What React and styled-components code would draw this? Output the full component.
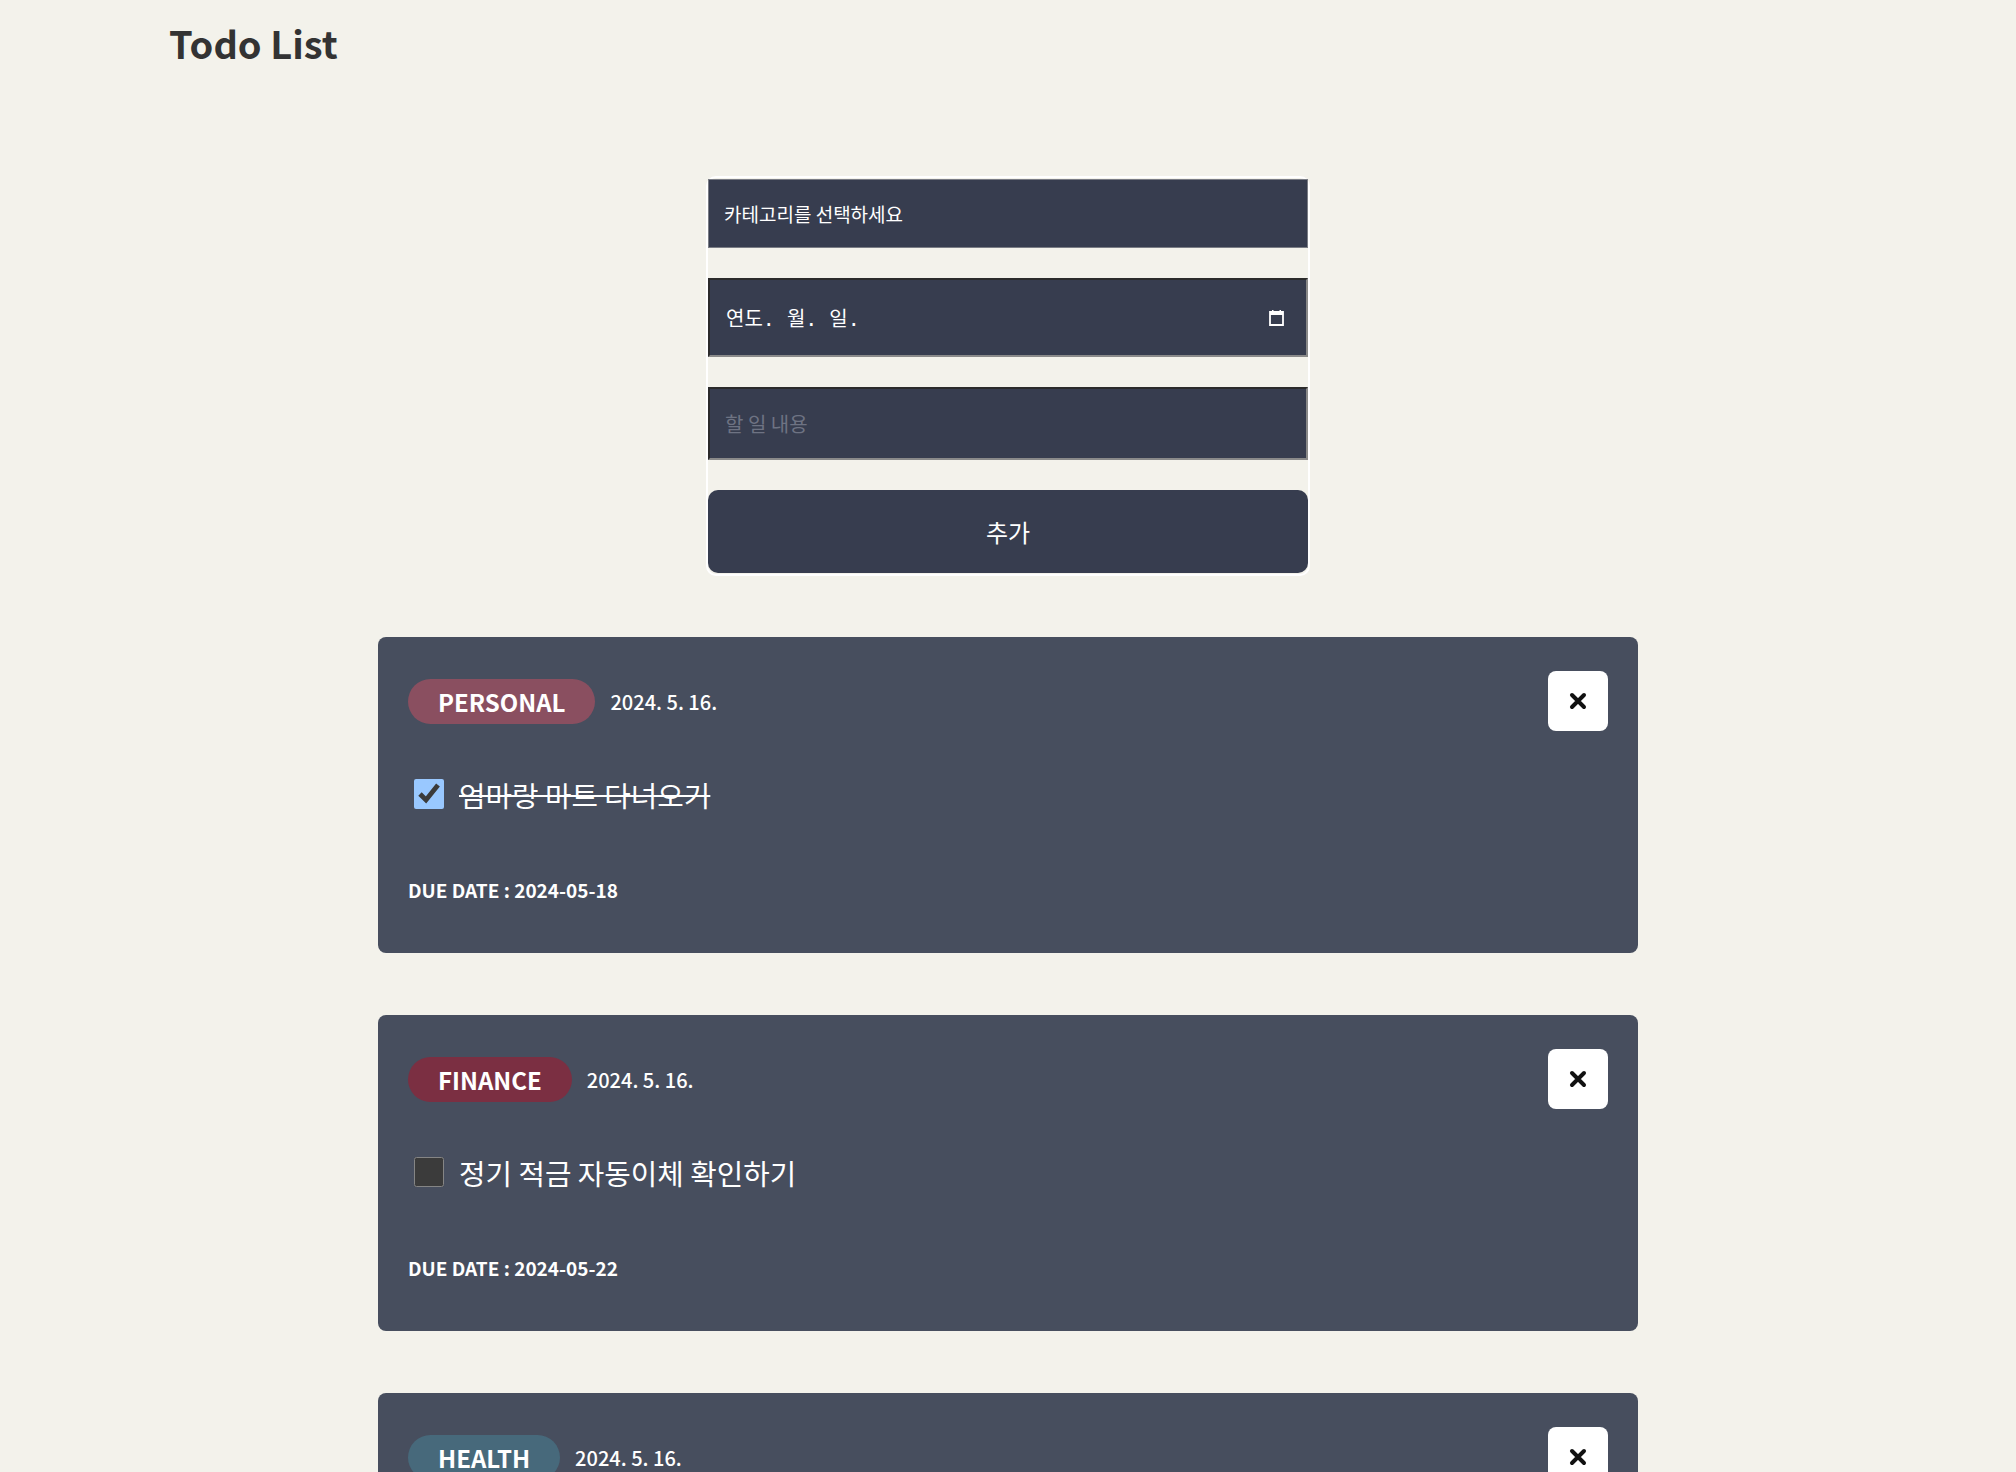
import React from "react";
import styled, { createGlobalStyle } from "styled-components";

const GlobalStyle = createGlobalStyle`
  body {
    margin: 0;
    background-color: #f3f2eb;
    font-family: "Noto Sans CJK KR", "Noto Sans", sans-serif;
  }
`;

const Page = styled.div`
  min-height: 1472px;
  padding-bottom: 80px;
`;

const Title = styled.h1`
  margin: 0;
  padding: 12px 0 0 169px;
  font-size: 38px;
  font-weight: 700;
  color: #333;
  line-height: 62px;
`;

const Form = styled.form`
  width: 600px;
  margin: 102px auto 0;
  border: 2px solid #fff;
  border-radius: 10px;
  padding: 1px 0;
  display: flex;
  flex-direction: column;
  gap: 30px;
`;

const Select = styled.select`
  appearance: none;
  height: 69px;
  background-color: #373d4f;
  border: 1px solid #7a7d85;
  color: #fff;
  padding: 0 15px;
  font-family: "Noto Sans CJK KR", sans-serif;
  font-size: 19px;
  outline: none;
`;

const DateField = styled.div`
  box-sizing: border-box;
  height: 79px;
  background-color: #373d4f;
  border-style: solid;
  border-width: 2px;
  border-color: #2b2b2b #8a8a8a #8a8a8a #2b2b2b;
  display: flex;
  align-items: center;
  justify-content: space-between;
  padding: 0 21px 0 16px;
  color: #fff;
  font-family: "DejaVu Sans Mono", "Noto Sans CJK KR", monospace;
  font-size: 20px;
`;

const TextInput = styled.input`
  box-sizing: border-box;
  height: 73px;
  background-color: #373d4f;
  border-style: solid;
  border-width: 2px;
  border-color: #2b2b2b #8a8a8a #8a8a8a #2b2b2b;
  padding: 0 15px;
  color: #fff;
  font-family: "Noto Sans CJK KR", sans-serif;
  font-size: 20px;
  outline: none;
  &::placeholder {
    color: #6e7383;
  }
`;

const AddButton = styled.button`
  height: 83px;
  border: none;
  border-radius: 10px;
  background-color: #373d4f;
  color: #fff;
  font-family: "Noto Sans CJK KR", sans-serif;
  font-size: 24px;
  cursor: pointer;
`;

const List = styled.ul`
  list-style: none;
  margin: 61px auto 0;
  padding: 0;
  width: 1260px;
  display: flex;
  flex-direction: column;
  gap: 62px;
`;

const Card = styled.li`
  background-color: #474e5e;
  border-radius: 8px;
  padding: 34px 30px 49px;
  color: #fff;
`;

const CardHeader = styled.div`
  display: flex;
  align-items: center;
  height: 60px;
`;

const Tag = styled.span`
  display: inline-flex;
  align-items: center;
  height: 45px;
  padding: 0 30px;
  border-radius: 23px;
  background-color: ${(p) => p.color};
  font-size: 24px;
  font-weight: 700;
`;

const CreatedAt = styled.span`
  margin-left: 15px;
  font-size: 20px;
  font-weight: 500;
`;

const CloseButton = styled.button`
  margin-left: auto;
  width: 60px;
  height: 60px;
  border: none;
  border-radius: 8px;
  background: #fff;
  display: flex;
  align-items: center;
  justify-content: center;
  cursor: pointer;
`;

const TodoRow = styled.label`
  display: flex;
  align-items: center;
  margin-top: 44px;
  height: 38px;
  padding-left: 6px;
`;

const Check = styled.input`
  color-scheme: dark;
  width: 30px;
  height: 30px;
  margin: 0 15px 0 0;
`;

const TodoText = styled.span`
  font-size: 28.8px;
  text-decoration: ${(p) => (p.done ? "line-through" : "none")};
`;

const DueDate = styled.p`
  margin: 63px 0 0;
  font-size: 19px;
  font-weight: 700;
  line-height: 28px;
`;

const CalendarIcon = () => (
  <svg width="17" height="18" viewBox="0 0 17 18">
    <path d="M2 3h13v13H2z" fill="none" stroke="#fff" strokeWidth="1.8" />
    <rect x="2" y="3" width="13" height="3" fill="#fff" />
    <rect x="4" y="1" width="1.5" height="3" fill="#fff" />
    <rect x="11.5" y="1" width="1.5" height="3" fill="#fff" />
  </svg>
);

const XIcon = () => (
  <svg width="18" height="18" viewBox="0 0 18 18">
    <path d="M3 3l12 12M15 3L3 15" stroke="#111" strokeWidth="4" strokeLinecap="round" />
  </svg>
);

const todos = [
  { id: 1, category: "PERSONAL", color: "#8a4f60", text: "엄마랑 마트 다녀오기", done: true, due: "2024-05-18" },
  { id: 2, category: "FINANCE", color: "#7b2f42", text: "정기 적금 자동이체 확인하기", done: false, due: "2024-05-22" },
  { id: 3, category: "HEALTH", color: "#47697b", text: "저녁 산책 30분 하기", done: false, due: "2024-05-20" },
];

export default function App() {
  return (
    <Page>
      <GlobalStyle />
      <Title>Todo List</Title>
      <Form onSubmit={(e) => e.preventDefault()}>
        <Select defaultValue="">
          <option value="">카테고리를 선택하세요</option>
          <option value="PERSONAL">PERSONAL</option>
          <option value="FINANCE">FINANCE</option>
          <option value="HEALTH">HEALTH</option>
        </Select>
        <DateField>
          <span>연도. 월. 일.</span>
          <CalendarIcon />
        </DateField>
        <TextInput placeholder="할 일 내용" />
        <AddButton type="submit">추가</AddButton>
      </Form>
      <List>
        {todos.map((t) => (
          <Card key={t.id}>
            <CardHeader>
              <Tag color={t.color}>{t.category}</Tag>
              <CreatedAt>2024. 5. 16.</CreatedAt>
              <CloseButton aria-label="삭제">
                <XIcon />
              </CloseButton>
            </CardHeader>
            <TodoRow>
              <Check type="checkbox" defaultChecked={t.done} />
              <TodoText done={t.done}>{t.text}</TodoText>
            </TodoRow>
            <DueDate>DUE DATE : {t.due}</DueDate>
          </Card>
        ))}
      </List>
    </Page>
  );
}
